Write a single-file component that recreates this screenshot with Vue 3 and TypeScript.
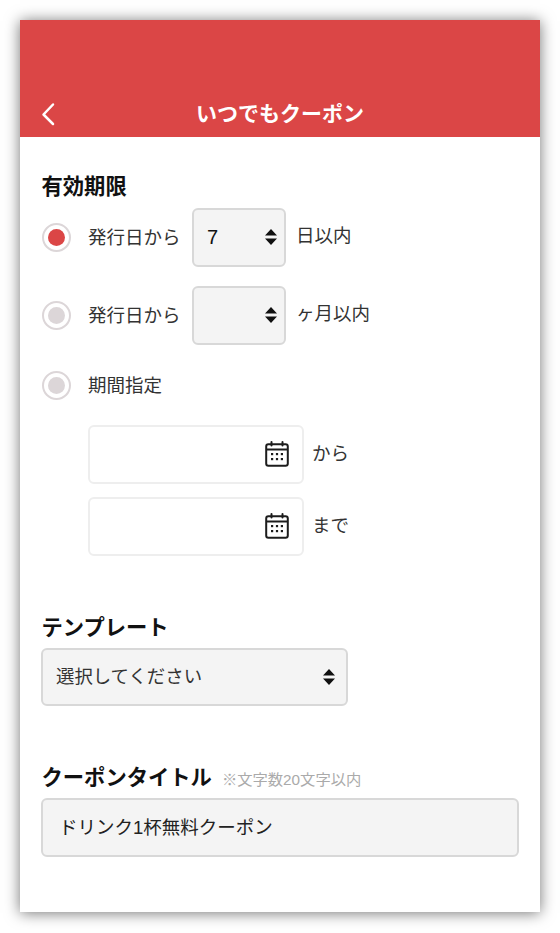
<script setup lang="ts">
interface Row { label: string; value: string; unit: string; on: boolean }
const rows: Row[] = [
  { label: '発行日から', value: '7', unit: '日以内', on: true },
  { label: '発行日から', value: '', unit: 'ヶ月以内', on: false },
]
const dates: string[] = ['から', 'まで']
</script>

<template>
  <div class="page">
    <div class="phone">
      <header class="bar">
        <svg class="back" width="16" height="24" viewBox="0 0 16 24" fill="none">
          <path d="M13 2.5 3.5 12.5 13 22" stroke="#fff" stroke-width="2.5" stroke-linecap="round" stroke-linejoin="round" />
        </svg>
        <h1 class="title">いつでもクーポン</h1>
      </header>
      <main class="content">
        <h2 class="heading first">有効期限</h2>
        <div v-for="(r, i) in rows" :key="i" class="row" :class="{ first: i === 0, second: i === 1 }">
          <span class="radio" :class="{ on: r.on }"><i></i></span>
          <span class="label">{{ r.label }}</span>
          <div class="select small">
            <span class="val">{{ r.value }}</span>
            <svg class="updown" width="12" height="16" viewBox="0 0 12 16"><path d="M6 0 12 6.6H0ZM6 16 0 9.4H12Z" fill="#111" /></svg>
          </div>
          <span class="unit">{{ r.unit }}</span>
        </div>
        <div class="row period">
          <span class="radio"><i></i></span>
          <span class="label">期間指定</span>
        </div>
        <div class="dates">
          <div v-for="d in dates" :key="d" class="date-row">
            <div class="date">
              <svg width="24" height="26" viewBox="0 0 24 26" fill="none">
                <rect x="1.2" y="3.2" width="21.6" height="21.6" rx="2.2" stroke="#1c1c1c" stroke-width="2" />
                <path d="M1.5 8.5H22.5" stroke="#1c1c1c" stroke-width="2" />
                <path d="M6.5 1V4.5M17.5 1V4.5" stroke="#1c1c1c" stroke-width="2" stroke-linecap="round" />
                <g fill="#1c1c1c">
                  <rect x="6" y="12" width="2.2" height="2.2" /><rect x="10.9" y="12" width="2.2" height="2.2" /><rect x="15.8" y="12" width="2.2" height="2.2" />
                  <rect x="6" y="17" width="2.2" height="2.2" /><rect x="10.9" y="17" width="2.2" height="2.2" /><rect x="15.8" y="17" width="2.2" height="2.2" />
                </g>
              </svg>
            </div>
            <span class="unit">{{ d }}</span>
          </div>
        </div>
        <h2 class="heading template">テンプレート</h2>
        <div class="select wide">
          <span class="placeholder">選択してください</span>
          <svg class="updown" width="12" height="16" viewBox="0 0 12 16"><path d="M6 0 12 6.6H0ZM6 16 0 9.4H12Z" fill="#111" /></svg>
        </div>
        <div class="title-head">
          <h2 class="heading">クーポンタイトル</h2>
          <span class="note">※文字数20文字以内</span>
        </div>
        <div class="field"><span class="field-text">ドリンク1杯無料クーポン</span></div>
      </main>
    </div>
  </div>
</template>

<style scoped>
.page {
  width: 560px;
  height: 933px;
  padding: 20px;
  box-sizing: border-box;
  background: #fff;
  font-family: "Noto Sans CJK JP", "Liberation Sans", sans-serif;
  color: #222;
}
.phone {
  width: 520px;
  height: 892px;
  background: #fff;
  box-shadow: 0 1px 14px rgba(0, 0, 0, 0.55);
  overflow: hidden;
}
.bar {
  height: 117px;
  background: #db4646;
  display: flex;
  align-items: flex-end;
  justify-content: center;
  position: relative;
}
.back {
  position: absolute;
  left: 20px;
  bottom: 11px;
}
.title {
  margin: 0 0 11px;
  font-size: 21px;
  line-height: 28px;
  font-weight: 700;
  color: #fff;
}
.content {
  padding: 0 21px;
}
.heading {
  margin: 0;
  padding-left: 0.5px;
  font-size: 21.3px;
  line-height: 28px;
  font-weight: 700;
  color: #111;
}
.heading.first {
  margin-top: 34px;
}
.row {
  display: flex;
  align-items: center;
  height: 58px;
}
.row.first {
  margin-top: 9px;
}
.row.second {
  margin-top: 20px;
}
.row.period {
  height: 30px;
  margin-top: 26px;
}
.radio {
  width: 29px;
  height: 29px;
  margin-left: 1px;
  box-sizing: border-box;
  border: 2.5px solid #dcd6d8;
  border-radius: 50%;
  display: flex;
  align-items: center;
  justify-content: center;
  flex: none;
  background: #fff;
}
.radio i {
  width: 17px;
  height: 17px;
  border-radius: 50%;
  background: #dcd6d8;
}
.radio.on i {
  background: #db4646;
}
.label {
  margin-left: 17px;
  font-size: 18.5px;
  color: #333;
  white-space: nowrap;
  position: relative;
  top: -1px;
}
.select {
  display: flex;
  align-items: center;
  justify-content: space-between;
  box-sizing: border-box;
  background: #f4f4f4;
  border: 2px solid #d8d8d8;
  border-radius: 6px;
  height: 59px;
}
.select.small {
  width: 94px;
  margin-left: 11.5px;
  padding: 0 7px 0 13px;
}
.val {
  font-family: "Liberation Sans", sans-serif;
  font-size: 20px;
  color: #111;
}
.unit {
  margin-left: 10px;
  font-size: 18.5px;
  color: #333;
  white-space: nowrap;
  position: relative;
  top: -3px;
}
.dates {
  margin: 25px 0 0 47px;
  display: flex;
  flex-direction: column;
  gap: 13px;
}
.date-row {
  display: flex;
  align-items: center;
}
.date {
  width: 216px;
  height: 59px;
  box-sizing: border-box;
  border: 2px solid #eee;
  border-radius: 6px;
  display: flex;
  align-items: center;
  justify-content: flex-end;
  padding: 0 13px 2px 0;
}
.date-row .unit {
  margin-left: 8px;
}
.heading.template {
  margin-top: 56px;
}
.select.wide {
  width: 307px;
  height: 58px;
  margin-top: 8px;
  padding: 0 11px 0 13px;
}
.placeholder {
  font-size: 18.4px;
  color: #333;
  position: relative;
  top: -2px;
}
.title-head {
  display: flex;
  align-items: baseline;
  margin-top: 56px;
}
.note {
  margin-left: 10px;
  font-family: "Liberation Sans", "Noto Sans CJK JP", sans-serif;
  font-size: 15.3px;
  color: #aaa;
}
.field {
  width: 478px;
  height: 59px;
  margin-top: 8px;
  box-sizing: border-box;
  background: #f4f4f4;
  border: 2px solid #d8d8d8;
  border-radius: 6px;
  padding-left: 16px;
  display: flex;
  align-items: center;
  font-family: "Liberation Sans", "Noto Sans CJK JP", sans-serif;
  font-size: 18.5px;
  color: #222;
}
.field-text {
  position: relative;
  top: -2px;
}
</style>

<style>
html, body { margin: 0; background: #fff; }
</style>
